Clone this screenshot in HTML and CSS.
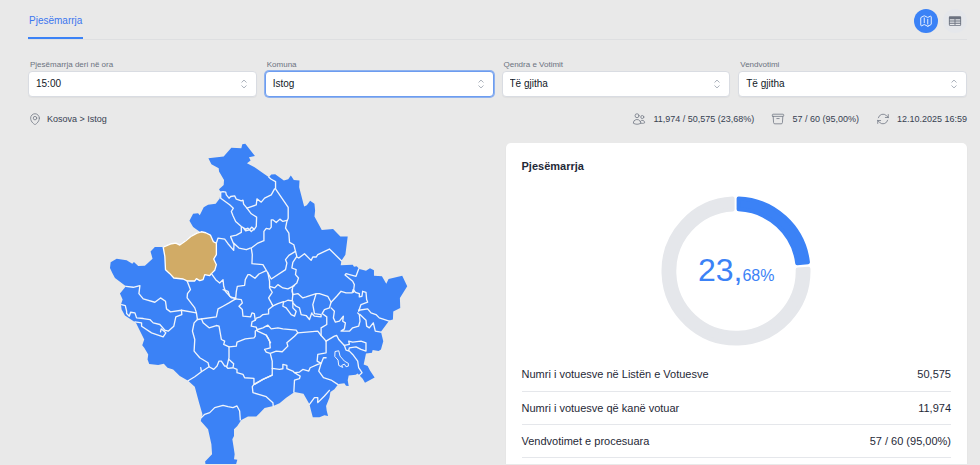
FILE: index.html
```html
<!DOCTYPE html>
<html lang="sq">
<head>
<meta charset="utf-8">
<meta name="viewport" content="width=device-width, initial-scale=1">
<title>Pjesëmarrja</title>
<link rel="stylesheet" href="styles.css">
</head>
<body>
<svg class="sprite" aria-hidden="true">
  <symbol id="chevrons" viewBox="0 0 24 24"><path d="M8.25 15 12 18.75 15.75 15m-7.5-6L12 5.25 15.75 9"/></symbol>
</svg>
<div class="page">
  <header class="topbar">
    <nav class="tabs"><a class="tab" href="#pjesemarrja" aria-current="page">Pjesëmarrja</a></nav>
    <div class="views">
      <button class="view view-active" type="button" aria-label="Harta">
        <svg class="icon-view" viewBox="0 0 24 24"><path d="M9 6.75V15m6-6v8.25m.503 3.498 4.875-2.437c.381-.19.622-.58.622-1.006V4.82c0-.836-.88-1.38-1.628-1.006l-3.869 1.934c-.317.159-.69.159-1.006 0L9.503 3.252a1.125 1.125 0 0 0-1.006 0L3.622 5.689C3.24 5.88 3 6.27 3 6.695V19.18c0 .836.88 1.38 1.628 1.006l3.869-1.934c.317-.159.69-.159 1.006 0l4.994 2.497c.317.158.69.158 1.006 0Z"/></svg>
      </button>
      <button class="view" type="button" aria-label="Tabela">
        <svg class="icon-table" viewBox="0 0 24 24"><path fill-rule="evenodd" d="M1.5 5.625c0-1.036.84-1.875 1.875-1.875h17.25c1.035 0 1.875.84 1.875 1.875v12.75c0 1.035-.84 1.875-1.875 1.875H3.375A1.875 1.875 0 0 1 1.5 18.375V5.625ZM21 9.375A.375.375 0 0 0 20.625 9h-7.5a.375.375 0 0 0-.375.375v1.5c0 .207.168.375.375.375h7.5a.375.375 0 0 0 .375-.375v-1.5Zm0 3.75a.375.375 0 0 0-.375-.375h-7.5a.375.375 0 0 0-.375.375v1.5c0 .207.168.375.375.375h7.5a.375.375 0 0 0 .375-.375v-1.5Zm0 3.75a.375.375 0 0 0-.375-.375h-7.5a.375.375 0 0 0-.375.375v1.5c0 .207.168.375.375.375h7.5a.375.375 0 0 0 .375-.375v-1.5ZM10.875 18.75a.375.375 0 0 0 .375-.375v-1.5a.375.375 0 0 0-.375-.375h-7.5a.375.375 0 0 0-.375.375v1.5c0 .207.168.375.375.375h7.5ZM3.375 15h7.5a.375.375 0 0 0 .375-.375v-1.5a.375.375 0 0 0-.375-.375h-7.5a.375.375 0 0 0-.375.375v1.5c0 .207.168.375.375.375Zm0-3.75h7.5a.375.375 0 0 0 .375-.375v-1.5A.375.375 0 0 0 10.875 9h-7.5A.375.375 0 0 0 3 9.375v1.5c0 .207.168.375.375.375Z"/></svg>
      </button>
    </div>
  </header>

  <form class="filters">
    <div class="field">
      <label for="ora">Pjesëmarrja deri në ora</label>
      <div class="control"><select id="ora"><option>15:00</option></select><svg class="chevrons"><use href="#chevrons"/></svg></div>
    </div>
    <div class="field">
      <label for="komuna">Komuna</label>
      <div class="control"><select id="komuna" class="selected"><option>Istog</option></select><svg class="chevrons"><use href="#chevrons"/></svg></div>
    </div>
    <div class="field">
      <label for="qendra">Qendra e Votimit</label>
      <div class="control"><select id="qendra"><option>Të gjitha</option></select><svg class="chevrons"><use href="#chevrons"/></svg></div>
    </div>
    <div class="field">
      <label for="vendvotimi">Vendvotimi</label>
      <div class="control"><select id="vendvotimi"><option>Të gjitha</option></select><svg class="chevrons"><use href="#chevrons"/></svg></div>
    </div>
  </form>

  <div class="summary">
    <div class="fact">
      <svg class="icon" viewBox="0 0 24 24"><path d="M15 10.5a3 3 0 1 1-6 0 3 3 0 0 1 6 0Z"/><path d="M19.5 10.5c0 7.142-7.5 11.25-7.5 11.25S4.5 17.642 4.5 10.5a7.5 7.5 0 1 1 15 0Z"/></svg>
      <span>Kosova &gt; Istog</span>
    </div>
    <div class="facts">
      <div class="fact">
        <svg class="icon" viewBox="0 0 24 24"><path d="M15 19.128a9.38 9.38 0 0 0 2.625.372 9.337 9.337 0 0 0 4.121-.952 4.125 4.125 0 0 0-7.533-2.493M15 19.128v-.003c0-1.113-.285-2.16-.786-3.07M15 19.128v.106A12.318 12.318 0 0 1 8.624 21c-2.331 0-4.512-.645-6.374-1.766l-.001-.109a6.375 6.375 0 0 1 11.964-3.07M12 6.375a3.375 3.375 0 1 1-6.75 0 3.375 3.375 0 0 1 6.75 0Zm8.25 2.25a2.625 2.625 0 1 1-5.25 0 2.625 2.625 0 0 1 5.25 0Z"/></svg>
        <span>11,974 / 50,575 (23,68%)</span>
      </div>
      <div class="fact">
        <svg class="icon" viewBox="0 0 24 24"><path d="m20.25 7.5-.625 10.632a2.25 2.25 0 0 1-2.247 2.118H6.622a2.25 2.25 0 0 1-2.247-2.118L3.75 7.5M10 11.25h4M3.375 7.5h17.25c.621 0 1.125-.504 1.125-1.125v-1.5c0-.621-.504-1.125-1.125-1.125H3.375c-.621 0-1.125.504-1.125 1.125v1.5c0 .621.504 1.125 1.125 1.125Z"/></svg>
        <span>57 / 60 (95,00%)</span>
      </div>
      <div class="fact">
        <svg class="icon" viewBox="0 0 24 24"><path d="M16.023 9.348h4.992v-.001M2.985 19.644v-4.992m0 0h4.992m-4.993 0 3.181 3.183a8.25 8.25 0 0 0 13.803-3.7M4.031 9.865a8.25 8.25 0 0 1 13.803-3.7l3.181 3.182m0-4.991v4.99"/></svg>
        <span>12.10.2025 16:59</span>
      </div>
    </div>
  </div>

  <main class="content">
    <svg class="map" viewBox="12 0 930 975" role="img" aria-label="Kosova">
      <path class="land" d="M326 55 372 50 395 23 425 25 428 13 437 11 466 48 448 52 453 62 442 70 465 82 508 112 515 104 527 103 553 122 566 118 574 107 583 120 600 122 599 142 614 200 622 196 632 183 645 192 647 212 645 230 667 271 701 268 723 290 745 290 738 345 726 363 724 377 760 375 764 381 772 380 780 388 800 393 812 386 824 392 824 408 848 410 861 432 868 418 909 408 924 440 918 450 902 475 903 505 882 516 881 540 870 543 845 577 852 605 845 630 838 635 820 632 818 640 800 642 793 675 805 680 812 693 826 714 797 730 790 718 775 702 769 706 748 708 745 723 748 740 740 739 735 732 717 734 705 750 693 758 690 775 680 800 682 815 686 830 675 828 660 834 640 834 635 815 630 795 612 763 585 758 560 775 540 792 521 800 495 806 480 822 470 832 445 832 425 842 413 860 403 870 403 890 398 900 402 925 405 945 403 960 413 962 405 990 320 990 316 967 337 945 335 915 325 870 303 845 308 825 298 790 285 742 265 724 240 710 220 690 203 685 192 673 175 677 148 674 143 660 145 645 133 625 127 617 133 600 118 570 108 550 75 528 65 510 63 495 68 480 60 462 78 440 45 415 37 400 30 385 32 368 50 357 80 362 97 372 102 367 115 379 135 378 158 357 152 335 165 322 188 322 215 312 240 316 275 288 300 276 280 262 269 243 280 222 295 220 300 226 312 202 325 195 348 192 360 176 363 157 358 148 372 135 373 120 358 95 357 85 335 73Z"/>
      <path class="chosen" d="M190 322 215 312 228 310 240 316 258 303 275 289 292 280 305 276 318 279 332 286 341 306 350 310 350 345 342 358 350 375 345 392 335 402 330 408 315 405 310 420 300 423 290 417 285 424 262 424 250 418 222 415 210 402 197 390 195 350Z"/>
      <g class="border">
        <path d="M363 157 370 155 378 157 380 165 388 175 393 170 405 168 410 178 425 183 430 181 432 193 442 205 470 195 472 177 485 187 495 175 515 165 525 147"/>
        <path d="M508 112 515 118 528 125 528 147 566 203 566 235 562 245 558 265 568 280 570 308 583 315 588 335 592 350 580 368 577 385 590 390 588 405 597 415 592 430 580 440 578 455 580 465"/>
        <path d="M562 242 550 245 541 238 530 248 520 240 515 240 515 262 510 268 500 266 493 275 493 303 475 310 455 325 458 345 457 372 490 375 505 400 515 418 558 390 562 370 558 360 568 347 588 335"/>
        <path d="M363 157 363 175 390 195 401 205 395 215 400 228 408 245 425 260 438 268 445 265 455 275 463 268 456 262 450 270 438 273 432 266M442 205 455 222 471 232 470 260 463 270"/>
        <path d="M425 262 425 278 410 286 393 290 400 308 418 325 440 330 452 325M350 310 355 295 375 298 385 312 402 332 403 315 393 292"/>
        <path d="M592 352 598 355 615 342 635 362 640 352 650 352 655 345 690 328 726 363"/>
        <path d="M500 393 478 403 466 416 450 405 445 405 437 420 435 437 413 440 410 455 408 478M335 402 348 420 360 430 370 420 372 440 377 455 395 475 408 475"/>
        <path d="M505 400 510 425 510 445 518 458 507 475 518 495M510 440 525 445 535 435 550 445 565 448 585 438M778 388 770 410 740 402 737 406 760 425 765 435 762 458"/>
        <path d="M262 424 272 450 263 462 262 475 285 505 290 520 245 512 212 517 200 508 197 485 182 475 165 488 130 478 117 462 120 438 100 443 78 440"/>
        <path d="M245 512 246 525 228 532 222 560 205 575 195 572 180 555 160 550 150 540 130 537 110 535 105 520 92 518 88 530 80 522 80 515 76 498 65 495M105 547 125 550 125 560 155 580 190 592 198 580 184 568 182 577"/>
        <path d="M290 520 293 540 283 550 278 575 285 600 283 635 300 655 325 670 328 682 305 697 285 712 265 724M303 685 305 697"/>
        <path d="M293 540 350 532 355 508 370 500 388 490 408 478M370 450 385 455 390 470 408 478"/>
        <path d="M305 538 310 550 328 565 350 558 358 560 365 600 375 605 372 615 388 622 410 620 412 608 437 598 463 595 467 590 467 575 475 570"/>
        <path d="M408 478 425 480 428 490 418 500 428 510 430 530 453 532 457 520 464 522 467 542 457 547 455 560 470 563 474 575 500 587 513 610"/>
        <path d="M388 622 388 655 382 680 375 680 365 665 358 665 352 680 342 690 328 682M388 660 402 673 400 685 385 687 378 680M400 685 412 690 412 700 430 705 435 715 463 717 463 735 458 742 460 760 500 772 520 790 521 800M463 735 490 720 518 707"/>
        <path d="M305 835 315 825 330 820 345 805 370 798 385 802 400 805 412 800 420 815 422 842"/>
      </g>
      <g class="border" transform="translate(450 450)">
        <path d="M68 45 70 50 72 48 57 60 57 73 40 75 32 82 20 86 17 92M72 48 85 42 102 36 100 50 110 55 125 75 135 80 140 65 130 55 130 35M102 38 115 32 128 34 130 15"/>
        <path d="M24 120 40 115 55 107 65 118 85 115 100 118 140 122 145 130 205 125 215 138 230 155"/>
        <path d="M50 137 55 145 60 155 62 175 45 180 50 188 62 192 80 185 98 187 115 170 112 160 135 140 145 130M62 192 68 215 68 237"/>
        <path d="M15 285 40 270 68 257 68 237 90 240 100 238 100 225 112 228 112 238 130 245 135 250 150 248 160 240 178 245 182 235 205 225 215 222M135 250 152 260 150 268 135 272 133 308"/>
        <path d="M128 0 130 15 145 12 160 25 170 22 200 12 210 12 235 20 245 38 262 20 275 5 290 10 308 10 312 0M130 40 140 50 150 55 155 75 170 78 180 90 187 70M200 12 190 45 195 72 215 75 215 82 195 80 187 72"/>
        <path d="M245 38 240 55 225 60 218 72 232 82 232 105 215 115 215 138M312 0 318 8 330 12 330 22 338 20 340 5 350 8 352 30 355 38 335 45 328 65"/>
        <path d="M328 62 355 58 365 70 380 75 390 85 420 95M245 55 255 65 252 85 258 98 270 95 282 80 280 95 288 100 285 118 275 125 300 125 310 115 328 110 332 95 330 75 325 70"/>
        <path d="M332 75 350 92 352 110 360 115 372 100 378 125 395 128M230 155 255 140 262 138 268 150 285 168 300 165 298 155 310 158 335 155 350 160 350 185 335 180 320 172 300 175 298 183"/>
        <path d="M285 168 290 182 300 185 310 195 325 215 328 235 338 250 330 258M230 155 230 190 205 195 203 215 215 222 222 205 230 205M215 222 208 245 222 265 245 272 265 285M180 345 195 325 205 325 205 340 225 320 240 303"/>
        <path class="enclave" d="M258 186 268 184 272 200 285 215 297 222 297 230 290 232 285 224 277 228 280 234 268 228 266 212 257 202Z"/>
      </g>
    </svg>

    <section class="card" id="pjesemarrja">
      <h2>Pjesëmarrja</h2>
      <div class="donut">
        <svg viewBox="0 0 150 150" aria-hidden="true">
          <path class="rest" d="M147.47 72.83A72.5 72.5 0 1 1 71.6 2.58V13.4A61.7 61.7 0 1 0 136.69 73.45Z"/>
          <path class="share" d="M77.6 2.55A72.5 72.5 0 0 1 146.96 66.19L136.21 67.21A61.7 61.7 0 0 0 77.6 13.35Z"/>
        </svg>
        <p class="percent">23,<small>68%</small></p>
      </div>
      <table>
        <tbody>
          <tr><th scope="row">Numri i votuesve në Listën e Votuesve</th><td>50,575</td></tr>
          <tr><th scope="row">Numri i votuesve që kanë votuar</th><td>11,974</td></tr>
          <tr><th scope="row">Vendvotimet e procesuara</th><td>57 / 60 (95,00%)</td></tr>
        </tbody>
      </table>
    </section>
  </main>
</div>
</body>
</html>
```
FILE: styles.css
```css
* {
  box-sizing: border-box;
}

body {
  margin: 0;
  background: #e9e9e9;
  color: #1f2937;
  font-family: "Liberation Sans", Arial, sans-serif;
  font-size: 9px;
  line-height: 14px;
}

svg {
  display: block;
  fill: none;
  stroke: currentColor;
  stroke-width: 1.5;
  stroke-linecap: round;
  stroke-linejoin: round;
}

.sprite {
  display: none;
}

.page {
  padding: 0 13px 0 28px;
}

.topbar {
  display: flex;
  justify-content: space-between;
  height: 40px;
  border-bottom: 1px solid #dedfe1;
}

.tabs {
  display: flex;
}

.tab {
  display: flex;
  align-items: center;
  height: 39px;
  padding: 4px 1px 0;
  border-bottom: 2px solid #3b82f6;
  color: #3b76ef;
  font-size: 10px;
  text-decoration: none;
}

.views {
  display: flex;
  align-items: center;
  gap: 5px;
  padding-top: 2px;
}

.view {
  display: grid;
  place-items: center;
  width: 24px;
  height: 24px;
  padding: 0;
  border: 0;
  border-radius: 50%;
  background: #e5e7eb;
  color: #6b7280;
}

.view-active {
  background: #3b82f6;
  color: #fff;
}

.icon-view {
  width: 14px;
  height: 14px;
}

.icon-table {
  width: 14px;
  height: 14px;
  fill: currentColor;
  stroke: none;
}

.filters {
  display: grid;
  grid-template-columns: repeat(4, 1fr);
  gap: 8px;
  padding-top: 18px;
}

.field label {
  display: block;
  padding-left: 2px;
  color: #6b7280;
  font-size: 8px;
  line-height: 13px;
}

.control {
  position: relative;
}

select {
  display: block;
  width: 100%;
  height: 26px;
  padding: 0 7px;
  appearance: none;
  border: 1px solid #d9dce2;
  border-radius: 4px;
  background: #fff;
  color: #111827;
  font: inherit;
  font-size: 10px;
  box-shadow: 0 1px 1px rgba(0, 0, 0, 0.04);
}

.selected {
  border-color: #6c9cf0;
  box-shadow: 0 0 0 1px #8fb2ee;
}

.chevrons {
  position: absolute;
  top: 6px;
  right: 6px;
  width: 14px;
  height: 14px;
  color: #9ca3af;
  pointer-events: none;
}

.summary,
.facts,
.fact {
  display: flex;
  align-items: center;
}

.summary {
  justify-content: space-between;
  padding: 15px 0 17px;
  color: #374151;
}

.facts {
  gap: 17px;
}

.fact {
  gap: 5px;
}

.facts .fact {
  gap: 7px;
}

.icon {
  width: 14px;
  height: 14px;
  color: #7b818d;
}

.content {
  display: grid;
  grid-template-columns: 1fr 1fr;
  gap: 16px;
}

.map {
  width: 67%;
  margin: -3px auto 0;
}

.land {
  fill: #3b82f6;
  stroke: none;
}

.chosen {
  fill: #d1ab66;
  stroke: #fff;
  stroke-width: 4;
}

.border {
  stroke: #f1f5fb;
  stroke-width: 4;
}

.enclave {
  stroke-width: 3;
}

.card {
  padding: 15px 16px 0;
  border-radius: 5px 5px 0 0;
  background: #fff;
  box-shadow: 0 1px 2px rgba(0, 0, 0, 0.06);
}

h2 {
  margin: 0;
  font-size: 11px;
  line-height: 16px;
}

.donut {
  display: grid;
  place-items: center;
  padding: 22px 0 12px;
}

.donut svg,
.percent {
  grid-area: 1 / 1;
}

.donut svg {
  width: 150px;
  stroke-width: 4;
}

.rest {
  fill: #e5e7eb;
  stroke: #e5e7eb;
}

.share {
  fill: #3b82f6;
  stroke: #3b82f6;
}

.percent {
  margin: 0;
  padding-top: 4px;
  color: #3b82f6;
  font-size: 32px;
  line-height: 36px;
}

.percent small {
  font-size: 16px;
}

table {
  width: 100%;
  border-collapse: collapse;
  font-size: 11px;
}

th,
td {
  height: 33px;
  padding: 0;
  border-bottom: 1px solid #e5e7eb;
  font-weight: 400;
  text-align: left;
}

td {
  text-align: right;
}
```
